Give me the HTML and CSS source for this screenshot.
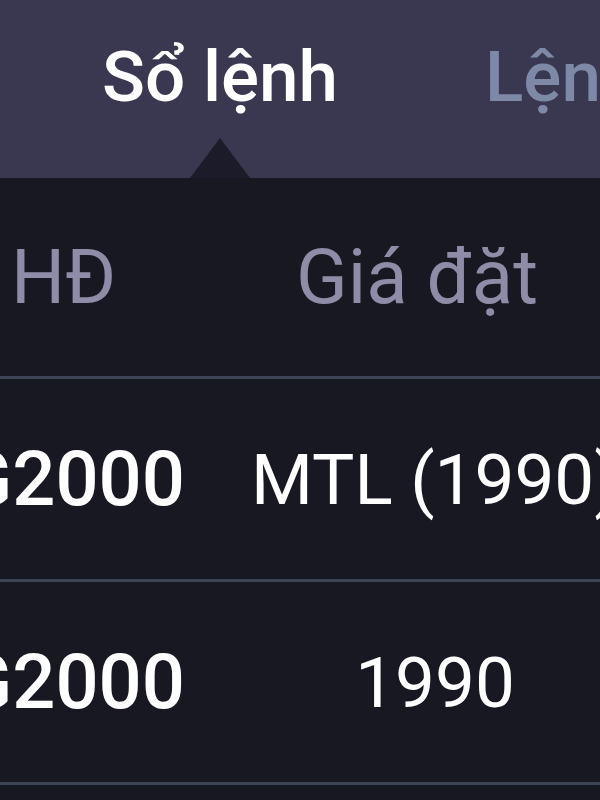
FILE: index.html
```html
<!DOCTYPE html>
<html lang="vi">
<head>
<meta charset="utf-8">
<title>Sổ lệnh</title>
<link rel="stylesheet" href="styles.css">
</head>
<body>
  <nav class="tabs">
    <div class="tab tab-active">Sổ lệnh</div>
    <div class="tab">Lệnh</div>
  </nav>
  <div class="table">
    <div class="row row-head">
      <div class="cell cell-code head-code">HĐ</div>
      <div class="cell cell-price head-price">Giá đặt</div>
    </div>
    <div class="row">
      <div class="cell cell-code">G2000</div>
      <div class="cell cell-price">MTL (1990)</div>
    </div>
    <div class="row">
      <div class="cell cell-code">G2000</div>
      <div class="cell cell-price">1990</div>
    </div>
  </div>
</body>
</html>
```
FILE: styles.css
```css
html, body {
  margin: 0;
  padding: 0;
}
body {
  width: 600px;
  height: 800px;
  overflow: hidden;
  background: #181822;
  font-family: Roboto, "Noto Sans", "Liberation Sans", sans-serif;
  color: #ffffff;
}
.tabs {
  height: 178px;
  background: #3a3850;
  display: flex;
  align-items: stretch;
  gap: 147px;
  padding-left: 102px;
  box-sizing: border-box;
  white-space: nowrap;
}
.tab {
  position: relative;
  padding-top: 35px;
  font-size: 71px;
  font-weight: 500;
  color: #7e89a8;
  line-height: normal;
}
.tab-active {
  color: #ffffff;
}
.tab-active::after {
  content: "";
  position: absolute;
  left: 50%;
  bottom: 0;
  margin-left: -30px;
  width: 0;
  height: 0;
  border-left: 30px solid transparent;
  border-right: 30px solid transparent;
  border-bottom: 40px solid #1c1b29;
}
.table {
  display: flex;
  flex-direction: column;
}
.row {
  display: flex;
  height: 200px;
  border-bottom: 3px solid #3d4455;
  white-space: nowrap;
}
.row-head {
  height: 198px;
}
.cell {
  display: flex;
  align-items: center;
  line-height: normal;
}
.cell-code {
  width: 185px;
  flex: none;
  justify-content: flex-end;
  font-size: 76px;
  font-weight: 500;
  overflow: visible;
}
.cell-price {
  width: 466px;
  flex: none;
  margin-left: 17px;
  justify-content: center;
  font-size: 71px;
  font-weight: 400;
}
.row-head .cell {
  color: #8e8ca6;
  font-weight: 400;
  font-size: 76px;
}
.head-code {
  justify-content: flex-start;
  padding-left: 11px;
  box-sizing: border-box;
}
.head-price {
  padding-right: 36px;
  box-sizing: border-box;
}
```
